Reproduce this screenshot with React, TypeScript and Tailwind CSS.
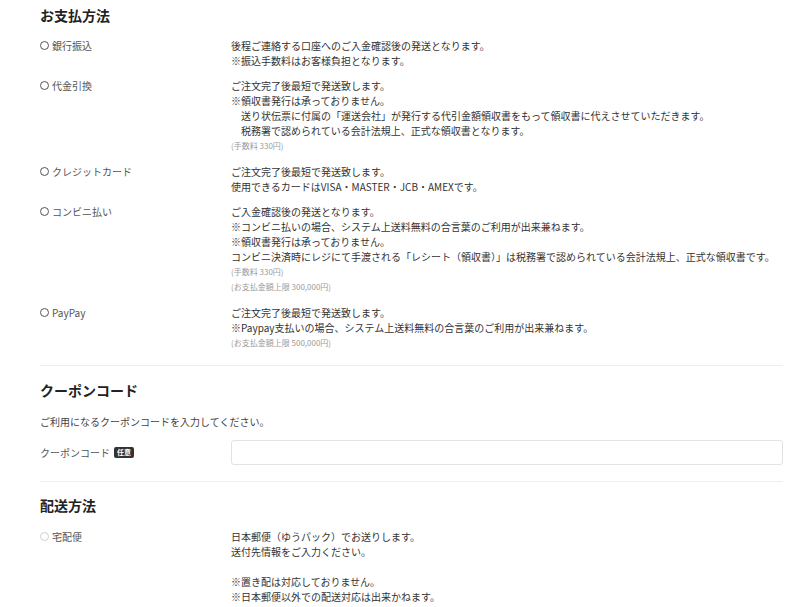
import React from 'react'

type Method = {
  label: string
  lines: string[]
  notes?: string[]
}

const METHODS: Method[] = [
  {
    label: '銀行振込',
    lines: ['後程ご連絡する口座へのご入金確認後の発送となります。', '※振込手数料はお客様負担となります。'],
  },
  {
    label: '代金引換',
    lines: [
      'ご注文完了後最短で発送致します。',
      '※領収書発行は承っておりません。',
      '\u3000送り状伝票に付属の「運送会社」が発行する代引金額領収書をもって領収書に代えさせていただきます。',
      '\u3000税務署で認められている会計法規上、正式な領収書となります。',
    ],
    notes: ['(手数料 330円)'],
  },
  {
    label: 'クレジットカード',
    lines: ['ご注文完了後最短で発送致します。', '使用できるカードはVISA・MASTER・JCB・AMEXです。'],
  },
  {
    label: 'コンビニ払い',
    lines: [
      'ご入金確認後の発送となります。',
      '※コンビニ払いの場合、システム上送料無料の合言葉のご利用が出来兼ねます。',
      '※領収書発行は承っておりません。',
      'コンビニ決済時にレジにて手渡される「レシート（領収書）」は税務署で認められている会計法規上、正式な領収書です。',
    ],
    notes: ['(手数料 330円)', '(お支払金額上限 300,000円)'],
  },
  {
    label: 'PayPay',
    lines: ['ご注文完了後最短で発送致します。', '※Paypay支払いの場合、システム上送料無料の合言葉のご利用が出来兼ねます。'],
    notes: ['(お支払金額上限 500,000円)'],
  },
]

function Radio({ light }: { light?: boolean }) {
  return (
    <span
      className={`inline-block w-[9px] h-[9px] rounded-full border shrink-0 ${light ? 'border-[#cfcfcf]' : 'border-[#555]'}`}
    />
  )
}

function Row({ m }: { m: Method }) {
  return (
    <div className="flex">
      <div className="w-[191px] shrink-0 flex items-center h-[15px] gap-[3px] text-[10px] leading-[15px] text-[#555]">
        <Radio />
        <span>{m.label}</span>
      </div>
      <div className="text-[10px] leading-[15px] text-[#333]">
        {m.lines.map((l, i) => (
          <p key={i} className="whitespace-pre">{l}</p>
        ))}
        {m.notes?.map((n, i) => (
          <p key={i} className="text-[8px] leading-[15.5px] text-[#9a9a9a]">{n}</p>
        ))}
      </div>
    </div>
  )
}

export default function App() {
  return (
    <div
      className="bg-white w-[799px] h-[607px] overflow-hidden pl-[40px] pr-[16px] pt-[6px]"
      style={{ fontFamily: '"Noto Sans CJK JP", "Noto Sans", sans-serif' }}
    >
      {/* お支払方法 */}
      <h2 className="text-[14px] leading-[18px] font-bold text-[#222]">お支払方法</h2>
      <div className="mt-[14px] flex flex-col gap-[10px] pb-[15px] border-b border-[#eeeeee]">
        {METHODS.map((m) => (
          <Row key={m.label} m={m} />
        ))}
      </div>

      {/* クーポンコード */}
      <h2 className="mt-[15px] text-[14px] leading-[18px] font-bold text-[#222]">クーポンコード</h2>
      <p className="mt-[15px] text-[10px] leading-[15px] text-[#444]">ご利用になるクーポンコードを入力してください。</p>
      <div className="mt-[11px] flex items-center pb-[16px] border-b border-[#eeeeee]">
        <div className="w-[191px] shrink-0 flex items-center gap-[4px] text-[10px] text-[#555]">
          <span>クーポンコード</span>
          <span className="bg-[#333] text-white text-[7px] leading-[11px] font-bold px-[3px] rounded-[2px]">任意</span>
        </div>
        <input className="flex-1 h-[25px] border border-[#e3e3e3] rounded-[3px] bg-white outline-none" />
      </div>

      {/* 配送方法 */}
      <h2 className="mt-[14px] text-[14px] leading-[18px] font-bold text-[#222]">配送方法</h2>
      <div className="mt-[15px] flex">
        <div className="w-[191px] shrink-0 flex items-center h-[15px] gap-[3px] text-[10px] text-[#555]">
          <Radio light />
          <span>宅配便</span>
        </div>
        <div className="text-[10px] leading-[15px] text-[#333]">
          <p>日本郵便（ゆうパック）でお送りします。</p>
          <p>送付先情報をご入力ください。</p>
          <p className="mt-[15px]">※置き配は対応しておりません。</p>
          <p>※日本郵便以外での配送対応は出来かねます。</p>
        </div>
      </div>
    </div>
  )
}
